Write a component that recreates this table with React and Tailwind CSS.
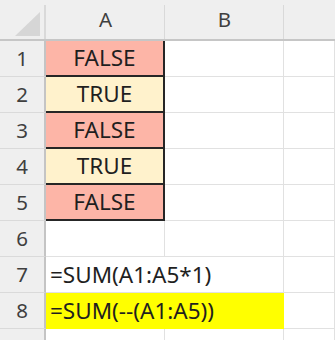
const rows = [
  { n: 1, v: 'FALSE', bg: 'bg-[#fdb5a7]' },
  { n: 2, v: 'TRUE', bg: 'bg-[#fff2cc]' },
  { n: 3, v: 'FALSE', bg: 'bg-[#fdb5a7]' },
  { n: 4, v: 'TRUE', bg: 'bg-[#fff2cc]' },
  { n: 5, v: 'FALSE', bg: 'bg-[#fdb5a7]' },
];

function RowHead({ n }) {
  return (
    <div className="w-[46px] shrink-0 h-full flex items-center justify-center bg-[#efefef] border-r-2 border-b border-r-[#c4c4c4] border-b-[#dadada] text-[20.5px] text-[#3f3f3f]">
      {n}
    </div>
  );
}

function Blank({ w = 'w-[119px]' }) {
  return <div className={`${w} shrink-0 h-full border-r border-b border-[#e1e1e1]`} />;
}

function ColHead({ label, w = 'w-[119px]', line = 'w-px' }) {
  return (
    <div className={`relative ${w} shrink-0 h-full flex items-center justify-center text-[20.5px] text-[#3f3f3f]`}>
      {label}
      <span className={`absolute right-0 top-[5px] bottom-0 ${line} bg-[#d9d9d9]`} />
    </div>
  );
}

export default function App() {
  return (
    <div className="w-[335px] h-[340px] overflow-hidden bg-white" style={{ fontFamily: '"Noto Sans", "Open Sans", sans-serif' }}>
      {/* column headers */}
      <div className="flex h-[41px] bg-[#efefef] border-b-2 border-[#c6c6c6]">
        <div className="relative w-[46px] shrink-0 h-full">
          <svg className="absolute left-[15px] top-[12px]" width="25" height="24" viewBox="0 0 25 24">
            <polygon points="25,0 25,24 0,24" fill="#d6d6d6" />
          </svg>
          <span className="absolute right-0 top-[5px] bottom-0 w-[2px] bg-[#d9d9d9]" />
        </div>
        <ColHead label="A" />
        <ColHead label="B" />
        <div className="flex-1" />
      </div>

      {rows.map((r) => (
        <div key={r.n} className="flex h-[36px]">
          <RowHead n={r.n} />
          <div className={`w-[119px] shrink-0 h-full flex items-center justify-center ${r.bg} border-r-2 border-b-2 border-[#262626] text-[22.5px] text-[#1f1f1f]`}>
            {r.v}
          </div>
          <Blank />
          <Blank w="flex-1" />
        </div>
      ))}

      <div className="flex h-[36px]">
        <RowHead n={6} />
        <Blank />
        <Blank />
        <Blank w="flex-1" />
      </div>

      <div className="flex h-[36px]">
        <RowHead n={7} />
        <div className="w-[238px] shrink-0 h-full flex items-center pl-[4px] border-r border-b border-[#e1e1e1] text-[22.5px] text-[#1f1f1f] whitespace-nowrap">
          =SUM(A1:A5*1)
        </div>
        <Blank w="flex-1" />
      </div>

      <div className="flex h-[36px]">
        <RowHead n={8} />
        <div className="w-[238px] shrink-0 h-full flex items-center pl-[4px] bg-[#ffff00] text-[22.5px] text-[#1f1f1f] whitespace-nowrap">
          =SUM(--(A1:A5))
        </div>
        <Blank w="flex-1" />
      </div>

      <div className="flex h-[36px]">
        <RowHead n="" />
        <Blank />
        <Blank />
        <Blank w="flex-1" />
      </div>
    </div>
  );
}
